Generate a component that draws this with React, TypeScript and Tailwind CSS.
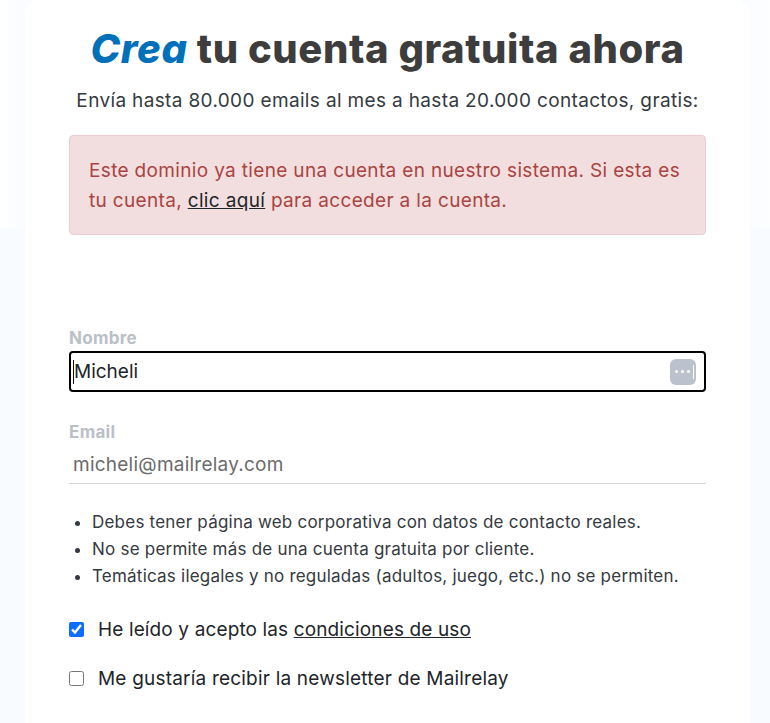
import React from 'react';

export default function App() {
  return (
    <div className="relative h-[723px] overflow-hidden bg-[#f8fbff] font-['Inter',sans-serif] text-[#3c3c3c]">
      {/* soft wave behind the card */}
      <div className="absolute inset-x-0 top-0 h-[228px] bg-[linear-gradient(90deg,#ffffff_0%,#fafcff_3.2%,#fafcff_96.8%,#fdfeff_100%)]" />
      <div className="relative ml-[25px] h-[723px] w-[725px] rounded-t-[14px] bg-white px-[44px] pt-[26px]">
        <h1 className="text-center text-[40px] leading-[46px] font-extrabold tracking-[0.57px] text-[#3d3d3d]">
          <em className="text-[#0070b8]">Crea</em> tu cuenta gratuita ahora
        </h1>
        <p className="mt-[15px] text-center text-[19px] leading-[27px] tracking-[0.35px] text-[#343a40]">
          Envía hasta 80.000 emails al mes a hasta 20.000 contactos, gratis:
        </p>

        <div className="mt-[21px] h-[100px] rounded border border-[#eccdd2] bg-[#f2dede] px-[19px] py-[20px] text-[19px] leading-[30px] tracking-[0.34px] text-[#a94442]">
          Este dominio ya tiene una cuenta en nuestro sistema. Si esta es tu cuenta,{' '}
          <a className="text-[#212529] underline">clic aquí</a> para acceder a la cuenta.
        </div>

        <label className="mt-[94px] block text-[17px] leading-[19px] font-bold tracking-[0.3px] text-[#b9c0c7]">Nombre</label>
        <div className="mt-[3px] flex h-[41px] items-center justify-between rounded-[4px] border-2 border-black pr-[8px] pl-[2px] text-[19px] text-[#212529]">
          <span className="border-l border-[#111] leading-[24px]">Micheli</span>
          <span className="flex h-[26px] w-[26px] items-center justify-center gap-[2.5px] rounded-[6px] bg-[#bcc2cd] pl-[2px]">
            <i className="h-[3.5px] w-[3.5px] rounded-full bg-white" />
            <i className="h-[3.5px] w-[3.5px] rounded-full bg-white" />
            <i className="h-[3.5px] w-[3.5px] rounded-full bg-white" />
            <i className="h-[14px] w-[1px] bg-white" />
          </span>
        </div>

        <label className="mt-[31px] block text-[17px] leading-[19px] font-bold tracking-[0.3px] text-[#b9c0c7]">Email</label>
        <div className="h-[42px] border-b border-[#d4d4d4] pt-[9px] pl-[4px] text-[19px] leading-[27px] tracking-[0.24px] text-[#6b6b6b]">
          micheli@mailrelay.com
        </div>

        <ul className="mt-[25px] list-disc pl-[23px] text-[17px] leading-[27px] tracking-[0.22px] text-[#343a40]">
          <li>Debes tener página web corporativa con datos de contacto reales.</li>
          <li>No se permite más de una cuenta gratuita por cliente.</li>
          <li>Temáticas ilegales y no reguladas (adultos, juego, etc.) no se permiten.</li>
        </ul>

        <div className="mt-[26px] flex items-center gap-[14px] text-[19px] leading-[27px] tracking-[0.13px] text-[#212529]">
          <input type="checkbox" defaultChecked className="h-[15px] w-[15px] accent-[#0d6efd]" />
          <span>
            He leído y acepto las <a className="underline">condiciones de uso</a>
          </span>
        </div>
        <div className="mt-[22px] flex items-center gap-[14px] text-[19px] leading-[27px] tracking-[0.2px] text-[#212529]">
          <input type="checkbox" className="h-[15px] w-[15px]" />
          <span>Me gustaría recibir la newsletter de Mailrelay</span>
        </div>
      </div>
    </div>
  );
}
